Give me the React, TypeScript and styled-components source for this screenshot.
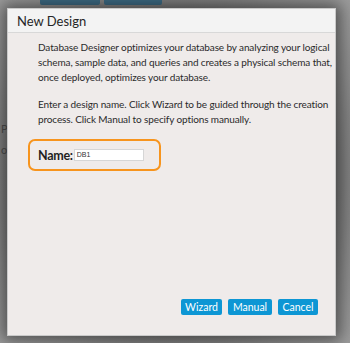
import React from "react";
import styled, { createGlobalStyle } from "styled-components";

const GlobalStyle = createGlobalStyle`
  html, body {
    margin: 0;
    padding: 0;
    background: #8f8f8f;
  }
  body {
    font-family: Lato, "Liberation Sans", Arial, sans-serif;
  }
`;

const Page = styled.div`
  position: relative;
  width: 350px;
  height: 343px;
  overflow: hidden;
  background: radial-gradient(ellipse at 50% 50%, #5f5f5f 0%, #6e6e6e 55%, #8a8a8a 80%, #9b9b9b 100%);
  display: flex;
  padding: 8px 0 0 7px;
  box-sizing: border-box;
`;

const BackTabs = styled.div`
  position: absolute;
  top: 0;
  left: 40px;
  display: flex;
  gap: 4px;
`;

const BackTab = styled.div<{ $w: number }>`
  width: ${(p) => p.$w}px;
  height: 5px;
  background: #3d6b84;
  border-radius: 0 0 2px 2px;
`;

const BackLetters = styled.div`
  position: absolute;
  left: 1px;
  top: 122px;
  display: flex;
  flex-direction: column;
  gap: 8px;
  color: #4e4e4e;
  font-size: 11px;
`;

const Dialog = styled.div`
  position: relative;
  width: 329px;
  height: 328px;
  background: #efebea;
  border: 1px solid #c9c9c9;
  box-shadow: 0 0 14px 4px rgba(0, 0, 0, 0.45);
  display: flex;
  flex-direction: column;
  box-sizing: border-box;
`;

const Header = styled.div`
  height: 23px;
  background: #f3f3f3;
  border-bottom: 1px solid #d8d8d8;
  display: flex;
  align-items: center;
  padding-left: 9px;
  font-size: 13px;
  color: #262626;
`;

const Body = styled.div`
  flex: 1;
  display: flex;
  flex-direction: column;
  padding: 7px 20px 20px 20px;
`;

const Paragraph = styled.p`
  margin: 0 0 12px 0;
  padding-left: 10px;
  font-size: 10px;
  line-height: 15px;
  color: #2a2a2a;
  letter-spacing: -0.12px;
  white-space: nowrap;
`;

const NameBox = styled.div`
  width: 133px;
  height: 32px;
  box-sizing: border-box;
  border: 2px solid #f7941d;
  border-radius: 7px;
  display: flex;
  align-items: center;
  padding-left: 8px;
`;

const NameLabel = styled.span`
  font-size: 12.5px;
  font-weight: bold;
  color: #1f1f1f;
  letter-spacing: -0.3px;
`;

const NameInput = styled.div`
  width: 70px;
  height: 12px;
  background: #ffffff;
  border: 1px solid #d6d6d6;
  box-sizing: border-box;
  font-family: "Liberation Sans", Arial, sans-serif;
  font-size: 7px;
  line-height: 10px;
  padding-left: 2px;
  color: #333;
  margin-left: 1px;
`;

const Footer = styled.div`
  margin-top: auto;
  display: flex;
  justify-content: flex-end;
  gap: 6px;
  margin-right: -3px;
`;

const Button = styled.div<{ $w: number }>`
  width: ${(p) => p.$w}px;
  height: 16px;
  background: #0d96d4;
  border-radius: 2px;
  color: #ffffff;
  font-size: 10.5px;
  display: flex;
  align-items: center;
  justify-content: center;
`;

export default function App() {
  return (
    <>
      <GlobalStyle />
      <Page>
        <BackTabs>
          <BackTab $w={60} />
          <BackTab $w={58} />
        </BackTabs>
        <BackLetters>
          <span>P</span>
          <span>o</span>
        </BackLetters>
        <Dialog>
          <Header>New Design</Header>
          <Body>
            <Paragraph>
              Database Designer optimizes your database by analyzing your logical
              <br />
              schema, sample data, and queries and creates a physical schema that,
              <br />
              once deployed, optimizes your database.
            </Paragraph>
            <Paragraph>
              Enter a design name. Click Wizard to be guided through the creation
              <br />
              process. Click Manual to specify options manually.
            </Paragraph>
            <NameBox>
              <NameLabel>Name:</NameLabel>
              <NameInput>DB1</NameInput>
            </NameBox>
            <Footer>
              <Button $w={41}>Wizard</Button>
              <Button $w={44}>Manual</Button>
              <Button $w={40}>Cancel</Button>
            </Footer>
          </Body>
        </Dialog>
      </Page>
    </>
  );
}
